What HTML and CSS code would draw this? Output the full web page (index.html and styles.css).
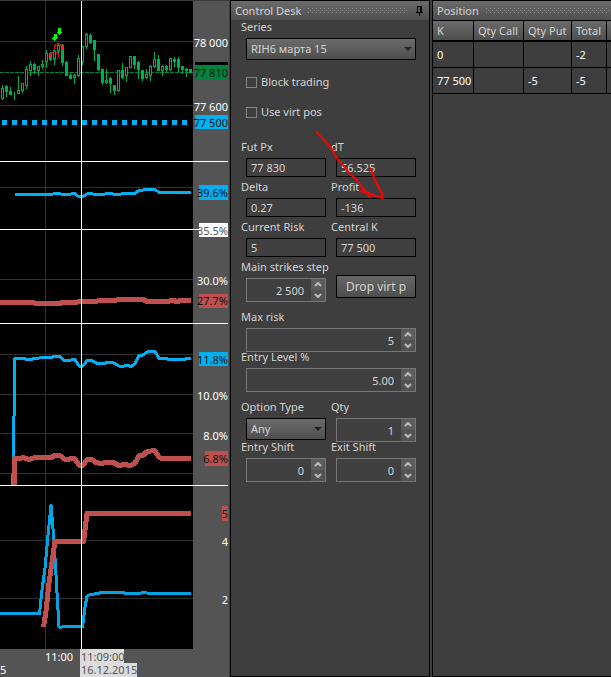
FILE: index.html
```html
<!DOCTYPE html>
<html lang="en">
<head>
<meta charset="utf-8">
<title>Control Desk</title>
<link rel="stylesheet" href="styles.css">
</head>
<body>
<main class="desk">
  <section class="chart" aria-label="Chart">
    <svg class="chart-svg" width="229" height="677" viewBox="0 0 229 677" shape-rendering="crispEdges">
      <rect class="axis-bg" width="228" height="677"/>
      <rect class="plot-bg" width="193" height="649"/>
      <path class="top-edge" d="M0 .5H229"/>
      <path class="gridline" d="M0 41.5H193M0 105.5H193M0 187.5H193M0 279.5H193M0 354.5H193M0 394.5H193M0 433.5H193M0 473.5H193M0 540.5H193M0 598.5H193M45.5 1V649"/>
      <path class="last-price" d="M0 72.5H193"/>
      <g id="candles"></g>
      <path class="strike" d="M2 122.5H182M182 122.5H189"/>
      <g class="signal">
        <path d="M54 34h3v3h1v1h-1v1h-1v1h-1v1h-1v-1h-1v-1h-1v-1h1v-1h1zM58 28h3v4h1v1h-1v1h-1v1h-1v-1h-1v-1h-1v-1h1z"/>
      </g>
      <g class="rings"><circle cx="54.500" cy="55.500" r="4"/><circle cx="58.500" cy="47.500" r="4"/></g>

      <path class="line blue" d="M15 194.500H52L54 193.500H60L62 194.500H70L72 193.500H75L77 195.500L79 196.500H83L86 194.500L88 193.500H92L94 194.500H104L106 193.500H112L114 194.500H120L122 193.500H135L138 191L143 190L145 189.500H155L159 192.500H191"/>
      <path class="line red" d="M0 302.500H33L36 303.500H60L62 302.500H76L79 301.500H96L99 300.500H115L118 299.500H143L147 301.500H168L171 300.500H174L176 301.500H178L180 300.500H191"/>

      <path class="line blue" d="M12.500 485V474M13.500 474V416M14.500 416V359L16 358.500H24L27 359.500H31L34 358.500L45 357.500H51L54 356.500H60L64 360.500H70L72 359.500H75L79 366H83L87 360.500H92L97 363.500L103 364L107 362.500H112L115 363.500L119 366H124L128 365.500L131 366.500L135 364L139 355H143L148 351.500H155L159 358.500H166L169 359.500H184L187 358.500H191"/>
      <path class="line red" d="M14.500 485V458.500H20L23 457.500L29 459.500L35 457.500H51L55 455.500H60L64 459L67 460L71 458.500H75L79 465.500H83L87 459.500H92L96 462.500L101 463.500L106 462.500H113L119 465.500L124 464.500L131 465.500L135 463L139 455.500H143L147 451.500L155 450.500L159 457.500L162 458.500H191"/>

      <path class="line blue deep" d="M0 613.500H39.500L42 590L45 568L48 535L51 505L54 540L56 575L59 627H62L64 626.500H82.500L85 607L87 596L90 594.500L98 593.500L101 592.500H123L126 593.500H140L142 592.500H146L148 593.500H191"/>
      <path class="line red" d="M43.500 627L46 611L49 583L52 562L55 541.500H83.500L87 513.500H191"/>

      <path class="crosshair" d="M81.500 1V649M0 161.500H228M0 229.500H228M0 323.500H228M0 485.500H228"/>

      <rect class="tag-black" x="195" y="62" width="33" height="4"/>
      <rect class="tag-green" x="195" y="65" width="33" height="15"/>
      <rect class="tag-blue" x="195" y="115" width="33" height="14"/>
      <rect class="tag-blue" x="199" y="185" width="29" height="15"/>
      <rect class="tag-white" x="199" y="223" width="29" height="14"/>
      <rect class="tag-red" x="199" y="294" width="29" height="14"/>
      <rect class="tag-blue" x="199" y="352" width="29" height="14"/>
      <rect class="tag-red" x="205" y="451" width="23" height="15"/>
      <rect class="tag-red" x="222" y="506" width="6" height="15"/>
      <rect class="tag-time" x="80" y="649" width="44" height="15"/>
      <rect class="tag-time" x="80" y="663" width="57" height="14"/>
      <g class="scale">
        <text x="228" y="47">78 000</text>
        <text class="dark" x="228" y="77">77 810</text>
        <text x="228" y="111">77 600</text>
        <text class="dark" x="228" y="127">77 500</text>
        <text class="dark" x="228" y="197">39.6%</text>
        <text class="grey" x="228" y="235">35.5%</text>
        <text x="228" y="285">30.0%</text>
        <text class="dark" x="228" y="305">27.7%</text>
        <text class="dark" x="228" y="364">11.8%</text>
        <text x="228" y="400">10.0%</text>
        <text x="228" y="440">8.0%</text>
        <text class="dark" x="228" y="463">6.8%</text>
        <text class="dark" x="228" y="518">5</text>
        <text x="228" y="546">4</text>
        <text x="228" y="604">2</text>
      </g>
      <g class="times">
        <text x="45" y="661">11:00</text>
        <text class="grey" x="81" y="661">11:09:00</text>
        <text x="0" y="674">5</text>
        <text class="grey" x="81" y="674">16.12.2015</text>
      </g>
    </svg>
  </section>

  <section class="panel control">
    <header class="titlebar"><h2>Control Desk</h2><span class="grip"></span>
      <button class="pin" type="button" aria-label="Pin"><svg width="7" height="10" viewBox="0 0 7 10" shape-rendering="crispEdges"><path d="M1 0h5v6h1v1H4v3H3V7H0V6h1zM2 1v5h2V1z" fill-rule="evenodd"/></svg></button>
    </header>
    <form class="form">
      <div class="field wide"><label for="series">Series</label><span class="combo"><select id="series"><option>RIH6 марта 15</option></select><i></i></span></div>
      <label class="check first"><input type="checkbox">Block trading</label>
      <label class="check last"><input type="checkbox">Use virt pos</label>
      <div class="field"><label for="fut">Fut Px</label><input id="fut" value="77 830"></div>
      <div class="field"><label for="dt">dT</label><input id="dt" value="56.525"></div>
      <div class="field"><label for="delta">Delta</label><input id="delta" value="0.27"></div>
      <div class="field"><label for="profit">Profit</label><input id="profit" value="-136"></div>
      <div class="field"><label for="risk">Current Risk</label><input id="risk" value="5"></div>
      <div class="field"><label for="central">Central K</label><input id="central" value="77 500"></div>
      <div class="field"><label for="step">Main strikes step</label><span class="spin"><input id="step" value="2 500"><button type="button" aria-label="Up"><svg viewBox="0 0 8 5"><path d="M1 4L4 1L7 4"/></svg></button><button type="button" aria-label="Down"><svg viewBox="0 0 8 5"><path d="M1 1L4 4L7 1"/></svg></button></span></div>
      <button class="drop" type="button">Drop virt p</button>
      <div class="field wide group"><label for="max">Max risk</label><span class="spin"><input id="max" value="5"><button type="button" aria-label="Up"><svg viewBox="0 0 8 5"><path d="M1 4L4 1L7 4"/></svg></button><button type="button" aria-label="Down"><svg viewBox="0 0 8 5"><path d="M1 1L4 4L7 1"/></svg></button></span></div>
      <div class="field wide"><label for="level">Entry Level %</label><span class="spin"><input id="level" value="5.00"><button type="button" aria-label="Up"><svg viewBox="0 0 8 5"><path d="M1 4L4 1L7 4"/></svg></button><button type="button" aria-label="Down"><svg viewBox="0 0 8 5"><path d="M1 1L4 4L7 1"/></svg></button></span></div>
      <div class="field group"><label for="type">Option Type</label><span class="combo"><select id="type"><option>Any</option></select><i></i></span></div>
      <div class="field group"><label for="qty">Qty</label><span class="spin"><input id="qty" value="1"><button type="button" aria-label="Up"><svg viewBox="0 0 8 5"><path d="M1 4L4 1L7 4"/></svg></button><button type="button" aria-label="Down"><svg viewBox="0 0 8 5"><path d="M1 1L4 4L7 1"/></svg></button></span></div>
      <div class="field"><label for="entry">Entry Shift</label><span class="spin"><input id="entry" value="0"><button type="button" aria-label="Up"><svg viewBox="0 0 8 5"><path d="M1 4L4 1L7 4"/></svg></button><button type="button" aria-label="Down"><svg viewBox="0 0 8 5"><path d="M1 1L4 4L7 1"/></svg></button></span></div>
      <div class="field"><label for="exit">Exit Shift</label><span class="spin"><input id="exit" value="0"><button type="button" aria-label="Up"><svg viewBox="0 0 8 5"><path d="M1 4L4 1L7 4"/></svg></button><button type="button" aria-label="Down"><svg viewBox="0 0 8 5"><path d="M1 1L4 4L7 1"/></svg></button></span></div>
    </form>
    <svg class="arrow" width="72" height="72" viewBox="314 129 72 72"><path d="M316.500 132L321 137L330 146.500L334 153L338 160L344 166L349 173L357 180L362 187L370 197M370.500 168.500L374 178L379 188L382.500 194V198L373 195L361 191L369 192.500"/></svg>
  </section>

  <section class="panel position">
    <header class="titlebar"><h2>Position</h2><span class="grip"></span></header>
    <table>
      <thead><tr><th class="k">K</th><th class="call">Qty Call</th><th class="put">Qty Put</th><th class="total">Total</th><th class="rest"></th></tr></thead>
      <tbody>
        <tr><td>0</td><td></td><td></td><td>-2</td><td></td></tr>
        <tr><td>77 500</td><td></td><td>-5</td><td>-5</td><td></td></tr>
      </tbody>
    </table>
  </section>
</main>
<script src="script.js"></script>
</body>
</html>
```
FILE: styles.css
```css
* { box-sizing: border-box; }
body {
  margin: 0;
  background: #3e3e3e;
  color: #d4d4d4;
  font: 11px/14px "Noto Sans", "Open Sans", sans-serif;
}
input, select, button { font: inherit; color: inherit; margin: 0; }
.desk { display: flex; min-height: 100vh; background: #3e3e3e; }

.chart { flex: none; background: #545454; }
.chart-svg { display: block; }
.axis-bg { fill: #545454; }
.plot-bg { fill: #000; }
.top-edge { stroke: #3c3c3c; }
.gridline { stroke: #303030; }
.last-price { stroke: #00843c; stroke-dasharray: 4 1; }
.wick { stroke: #00b050; fill: none; }
.full { stroke: #00b050; fill: #00b050; }
.hollow { stroke: #00b050; fill: #000; }
.strike { stroke: #00b0f0; stroke-width: 5; stroke-dasharray: 5 5; }
.signal { fill: #0f0; }
.rings { fill: none; stroke: #f00; }
.line { fill: none; stroke-linejoin: round; }
.blue { stroke: #00b0f0; stroke-width: 3; }
.deep { stroke: #00a4e4; }
.red { stroke: #c0504d; stroke-width: 5; }
.crosshair { stroke: #fff; }
.tag-black { fill: #000; }
.tag-green { fill: #00843c; }
.tag-blue { fill: #00b0f0; }
.tag-white { fill: #fff; }
.tag-red { fill: #c0504d; }
.tag-time { fill: #dcdcdc; }
.scale, .times { fill: #fff; }
.scale { text-anchor: end; }
.dark { fill: #111; }
.grey { fill: #555; }

.panel { border: 1px solid #000; margin-left: 1px; background: #3e3e3e; }
.control { flex: none; width: 200px; position: relative; }
.position { flex: 1; min-width: 0; margin-left: 2px; border-right: 0; }
.titlebar {
  display: flex;
  align-items: center;
  height: 19px;
  padding: 0 4px;
  background: linear-gradient(#6b6b6b, #4e4e4e);
}
.titlebar h2 { margin: 0; font-size: 11px; font-weight: 400; white-space: nowrap; }
.grip {
  flex: 1;
  height: 5px;
  margin: 0 8px 0 7px;
  background:
    conic-gradient(from 0deg at 1px 1px, transparent 75%, #8f8f8f 0) 0 0 / 4px 4px,
    conic-gradient(from 0deg at 1px 1px, transparent 75%, #8f8f8f 0) 2px 2px / 4px 4px;
}
.position .grip { margin-right: -2px; }
.pin { border: 0; padding: 0 2px 0 0; background: none; line-height: 0; }

.form {
  display: grid;
  grid-template-columns: 1fr 1fr;
  column-gap: 10px;
  padding: 2px 13px 0 15px;
}
.field { display: flex; flex-direction: column; height: 40px; min-width: 0; }
.field label { line-height: 10px; margin: 0 0 6px -5px; white-space: nowrap; }
.wide, .check { grid-column: 1 / -1; }
.group { margin-top: 10px; }
.field > input {
  width: 100%;
  height: 19px;
  padding: 0 4px;
  border: 1px solid #000;
  background: #404040;
}
.check { display: flex; align-items: center; gap: 4px; height: 30px; }
.first { margin-top: 5px; }
.last { margin-bottom: 15px; }
.check input {
  appearance: none;
  width: 11px;
  height: 11px;
  border: 1px solid #858585;
}
.combo { display: grid; align-items: center; }
.combo select {
  grid-area: 1 / 1;
  appearance: none;
  width: 100%;
  height: 22px;
  padding: 0 4px;
  border: 1px solid #000;
  border-radius: 0;
  background: linear-gradient(#6b6b6b, #4e4e4e);
}
.combo i {
  grid-area: 1 / 1;
  justify-self: end;
  margin-right: 4px;
  border: 4px solid transparent;
  border-top-color: #222;
  border-bottom: 0;
  pointer-events: none;
}
.spin {
  display: grid;
  grid-template: 1fr 1fr / 1fr 14px;
  height: 24px;
  border: 1px solid #777;
  background: #404040;
}
.spin input {
  grid-row: 1 / 3;
  min-width: 0;
  width: 100%;
  padding: 2px 7px 0;
  border: 0;
  background: none;
  text-align: right;
}
.spin button {
  display: grid;
  place-items: center;
  padding: 0;
  border: 0;
  background: #5c5c5c;
}
.spin button + button { background: #525252; }
.spin svg { width: 8px; height: 5px; fill: none; stroke: #bdbdbd; stroke-width: 2; }
.drop {
  align-self: end;
  height: 23px;
  margin-bottom: 4px;
  padding: 0;
  border: 1px solid #000;
  background: linear-gradient(#666, #4e4e4e);
  font-size: 12px;
}
.arrow { position: absolute; left: 83px; top: 128px; pointer-events: none; }
.arrow path { fill: none; stroke: #f00; stroke-width: 2; stroke-linejoin: round; stroke-linecap: round; }

table { width: 100%; table-layout: fixed; border-collapse: separate; border-spacing: 0; color: #fff; }
th, td { padding: 0 4px; text-align: left; font-weight: 400; white-space: nowrap; border-right: 1px solid #000; border-bottom: 1px solid #000; }
th { height: 22px; color: #d4d4d4; border-top: 1px solid #000; border-bottom-width: 2px; background: linear-gradient(#6b6b6b, #4e4e4e); }
td { height: 26px; }
.k { width: 41px; }
.call { width: 50px; }
.put { width: 48px; }
.total { width: 35px; }
th:last-child, td:last-child { border-right: 0; padding: 0; }
```
FILE: script.js
```js
// Each candle: high, body top, body bottom, low, filled flag. One candle per 4px.
const candles = [
  [85,88,98,99,0],[85,86,91,96,1],[87,91,94,94,1],[92,94,94,99,1],[76,90,93,93,0],[83,83,90,92,0],
  [66,69,85,88,0],[61,64,70,75,0],[63,64,69,73,1],[66,66,70,75,0],[60,64,66,68,0],[50,53,61,67,0],
  [52,53,59,60,1],[50,50,58,64,0],[43,45,50,54,0],[44,45,62,65,1],[61,62,75,75,1],[73,75,78,78,1],
  [74,75,77,83,0],[55,58,75,76,0],[46,46,61,64,0],[33,34,46,48,0],[33,35,42,43,1],[40,40,49,60,1],
  [54,54,69,70,1],[69,69,82,84,1],[69,80,82,83,0],[77,78,83,92,1],[85,85,90,94,1],[70,70,90,91,0],
  [63,70,77,78,1],[67,67,75,81,0],[56,56,67,67,0],[56,56,64,68,1],[61,62,69,78,1],[70,70,78,80,1],
  [69,74,77,78,0],[65,66,75,80,0],[52,59,66,67,0],[55,59,70,70,1],[65,66,70,75,0],[65,66,69,72,1],
  [58,58,69,70,0],[57,59,61,66,1],[57,59,67,71,1],[66,66,69,73,1],[68,69,70,76,1],[69,69,72,72,1]
];
document.getElementById('candles').innerHTML = candles.map(([h, t, b, l, f], i) => {
  const x = 1 + i * 4;
  return `<path class="wick" d="M${x + 1.5} ${h}V${l + 1}"/>` +
    `<rect class="${f ? 'full' : 'hollow'}" x="${x + 0.5}" y="${t + 0.5}" width="2" height="${b - t}"/>`;
}).join('');
```
